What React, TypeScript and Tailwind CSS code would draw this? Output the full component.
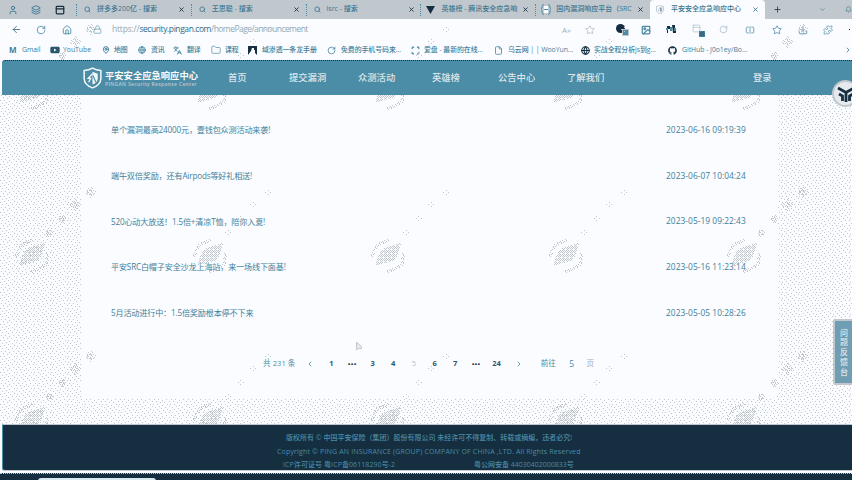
import React from "react";
import { ArrowLeft, RotateCw, Home, Lock, Star, Search, X, Plus, ChevronDown, ChevronRight, ChevronLeft, Globe, Folder, File, Languages, Scan, Layers, User, PanelTop, Puzzle, SquareSplitHorizontal, Image, MapPin, Download, Bell } from "lucide-react";
import { FaGithub, FaYoutube } from "react-icons/fa";

const TEAL = "#4b8ca6";
const NAVY = "#152e40";
const GRAY = "#c0c8ce";

/** A fixed-width slot, so that each bar is laid out as a run of cells. */
function Cell({ w, className = "", children }: { w: number; className?: string; children?: React.ReactNode }) {
  return (
    <div className={"flex h-full shrink-0 items-center whitespace-nowrap " + className} style={{ width: w }}>
      {children}
    </div>
  );
}

function ShieldLogo({ size, color }: { size: number; color: string }) {
  return (
    <svg width={size} height={size * 1.15} viewBox="0 0 20 23" fill="none" stroke={color} strokeWidth="1.6">
      <path d="M10 1.2 C7 3 4 3.6 1.2 3.8 V12 C1.2 17 5 20 10 22 C15 20 18.8 17 18.8 12 V3.8 C16 3.6 13 3 10 1.2Z" />
      <path d="M10 5 L15.5 7 V12 C15.5 15 13.5 17 10 18.5Z" fill={color} stroke="none" />
      <path d="M10 7 L5.5 12 H8 L6 16" strokeWidth="1.4" />
      <path d="M10.5 9 L13.5 16" stroke={TEAL} strokeWidth="1.2" />
    </svg>
  );
}

const tabs = [
  { title: "拼多多200亿 - 搜索", icon: "search" },
  { title: "王思聪 - 搜索", icon: "search" },
  { title: "lsrc - 搜索", icon: "search" },
  { title: "英雄榜 - 腾讯安全应急响", icon: "tri" },
  { title: "国内漏洞响应平台（SRC", icon: "braces" },
];

function TabBar() {
  return (
    <div className="flex h-[19px] items-center bg-[#c0c8ce] text-[7px] text-[#3a7691]">
      <Cell w={76}>
        <Cell w={31} className="pl-2"><User size={10} strokeWidth={2.2} /></Cell>
        <Cell w={24}><Layers size={10} strokeWidth={2.2} /></Cell>
        <Cell w={20}><PanelTop size={10} strokeWidth={3} color={NAVY} /></Cell>
      </Cell>
      {tabs.map((t) => (
        <div key={t.title} className="flex h-full w-[114.8px] shrink-0 items-center">
          <span className="h-[12px] w-px border-l border-dotted border-[#4b8ca6]" />
          <Cell w={20} className={t.icon === "search" ? "pl-[7px]" : "pl-[5px]"}>
            {t.icon === "search" && <Search size={7} strokeWidth={2.8} />}
            {t.icon === "tri" && <svg width="9" height="8" viewBox="0 0 9 8"><path d="M0 0 H9 L4.5 8Z" fill={NAVY} /></svg>}
            {t.icon === "braces" && (
              <svg width="10" height="11" viewBox="0 0 10 11" fill="none" stroke={TEAL}>
                <path d="M3 .5 Q1 .5 1 3 V4 L0 5.5 L1 7 V8 Q1 10.5 3 10.5 M7 .5 Q9 .5 9 3 V4 L10 5.5 L9 7 V8 Q9 10.5 7 10.5" />
                <path d="M3 2h4v7H3z" fill="#fafcff" stroke="none" /><path d="M3 5.5h4" />
              </svg>
            )}
          </Cell>
          <Cell w={81} className="font-medium">{t.title}</Cell>
          <X size={7} strokeWidth={3} color={NAVY} className="shrink-0" />
        </div>
      ))}
      <div className="flex h-full w-[115px] shrink-0 items-center rounded-t-[4px] bg-[#fafcff] pl-[6px]">
        <Cell w={15}><ShieldLogo size={8} color="#9fb2bd" /></Cell>
        <Cell w={81} className="font-medium">平安安全应急响应中心</Cell>
        <X size={7} strokeWidth={3} />
      </div>
      <Cell w={54} className="pl-2"><Plus size={9} strokeWidth={2} color={NAVY} /></Cell>
      <Cell w={26}><ChevronDown size={7} /></Cell>
      <Bell size={7} className="shrink-0" />
    </div>
  );
}

function AddressBar() {
  return (
    <div className="flex h-[21px] items-center text-[#4b8ca6]">
      <Cell w={36} className="pl-[11px]"><ArrowLeft size={11} strokeWidth={1.8} color="#38627a" /></Cell>
      <Cell w={26}><RotateCw size={10} strokeWidth={2} /></Cell>
      <Cell w={31}><Home size={10} strokeWidth={2.2} /></Cell>
      <Cell w={19}><Lock size={9} strokeWidth={1.6} /></Cell>
      <Cell w={450} className="text-[8.5px] tracking-[-0.55px] text-[#93a8b4]">
        <span className="tracking-[-0.2px]">https://</span><span className="tracking-[-0.42px] text-[#2f6c89]">security.pingan.com</span>/homePage/announcement
      </Cell>
      <Cell w={23} className="text-[8px] text-[#9fb0ba]">A»</Cell>
      <Cell w={31}><Star size={10} strokeWidth={1.6} color="#9fb0ba" /></Cell>
      <Cell w={25}>
        <div className="relative h-3 w-3">
          <div className="h-[9px] w-[9px] rounded-full bg-[#152e40]" />
          <div className="absolute -right-px bottom-0 h-[7px] w-[7px] border border-[#c0c8ce] bg-[#4b8ca6]" />
        </div>
      </Cell>
      <Cell w={25}><Image size={10} strokeWidth={3} /></Cell>
      <Cell w={26}>
        <svg width="10" height="9" viewBox="0 0 10 9"><path d="M1 1h3v3H2v4H1zM6 0h3v4h1v4H7z" fill={NAVY} /><path d="M4 2h2v4H4zM0 3h2v2H0zM8 3h2v3H8z" fill={TEAL} /></svg>
      </Cell>
      <Cell w={27}>
        <div className="relative h-3 w-3">
          <PanelTop size={9} strokeWidth={1.5} color="#9fb0ba" />
          <div className="absolute -bottom-px -right-px h-[6px] w-[6px] border border-dotted border-[#4b8ca6] bg-[#3a6a82]" />
        </div>
      </Cell>
      <Cell w={26}><RotateCw size={9} strokeWidth={1.5} color="#8aa8b7" /></Cell>
      <Cell w={27}><SquareSplitHorizontal size={10} strokeWidth={1.8} /></Cell>
      <Cell w={26}><Star size={10} strokeWidth={2} /></Cell>
      <Cell w={25}><Download size={10} strokeWidth={2} /></Cell>
      <Cell w={26}><Puzzle size={10} strokeWidth={1.8} /></Cell>
      <span className="h-px w-px bg-[#152e40]" />
    </div>
  );
}

const bookmarks = [
  { icon: <span className="w-[9px] text-[8px] font-bold leading-none">M</span>, iw: 13, w: 28, text: "Gmail" },
  { icon: <FaYoutube size={10} color="#28566d" />, iw: 13, w: 39, text: "YouTube" },
  { icon: <MapPin size={8} strokeWidth={3} />, iw: 12, w: 24, text: "地图" },
  { icon: <Globe size={8} strokeWidth={2.5} />, iw: 13, w: 22, text: "资讯" },
  { icon: <Languages size={9} strokeWidth={2.4} />, iw: 14, w: 24, text: "翻译" },
  { icon: <Folder size={10} strokeWidth={1.5} />, iw: 14, w: 23, text: "课程" },
  { icon: <svg width="9" height="9" viewBox="0 0 9 9"><path d="M0 0h9v9L7 7V4H6V2H4l-1 3L0 9z" fill={NAVY} /></svg>, iw: 14, w: 65, text: "域渗透一条龙手册" },
  { icon: <RotateCw size={9} strokeWidth={2} />, iw: 14, w: 70, text: "免费的手机号码来..." },
  { icon: <Scan size={9} strokeWidth={2.8} />, iw: 13, w: 70, text: "爱盘 - 最新的在线..." },
  { icon: <File size={9} strokeWidth={2} />, iw: 14, w: 73, text: "乌云网 | | WooYun..." },
  { icon: <Globe size={9} strokeWidth={3} color={NAVY} />, iw: 13, w: 74, text: "实战全程分析js到g..." },
  { icon: <FaGithub size={9} color={NAVY} />, iw: 14, w: 162, text: "GitHub - J0o1ey/Bo..." },
];

function Bookmarks() {
  return (
    <div className="flex h-[20px] items-center overflow-hidden pl-[9px] text-[6.9px] text-[#3f7f9a]">
      {bookmarks.map((b) => (
        <Cell key={b.text} w={b.iw + b.w} className="font-medium tracking-[-0.05px]">
          <Cell w={b.iw}>{b.icon}</Cell>
          {b.text}
        </Cell>
      ))}
      <ChevronRight size={8} strokeWidth={2.5} className="shrink-0" />
    </div>
  );
}

const nav = [
  ["首页", 61], ["提交漏洞", 69], ["众测活动", 74], ["英雄榜", 66], ["公告中心", 69], ["了解我们", 186], ["登录", 30],
] as const;

function SiteHeader() {
  return (
    <header className="relative z-20 ml-[2px] flex h-[35px] items-center rounded-tl-[3px] border-t border-dotted border-[#152e40] bg-[#4b8ca6] pl-[80px] text-[#dde6eb]">
      <Cell w={23} className="pl-px"><ShieldLogo size={19} color="#f4f8fb" /></Cell>
      <div className="flex w-[123px] shrink-0 flex-col whitespace-nowrap">
        <span className="text-[9.3px] font-bold leading-[11px] text-[#fafcff]">平安安全应急响应中心</span>
        <span className="text-[5px] font-semibold leading-[6px] tracking-[0.32px] text-[#c0c8ce]">PINGAN Security Response Center</span>
      </div>
      {nav.map(([label, w]) => (
        <Cell key={label} w={w} className="text-[9.3px] font-medium">{label}</Cell>
      ))}
    </header>
  );
}

const items = [
  ["单个漏洞最高24000元，壹钱包众测活动来袭!", "2023-06-16 09:19:39"],
  ["端午双倍奖励，还有Airpods等好礼相送!", "2023-06-07 10:04:24"],
  ["520心动大放送！1.5倍+清凉T恤，陪你入夏!", "2023-05-19 09:22:43"],
  ["平安SRC白帽子安全沙龙上海站，来一场线下面基!", "2023-05-16 11:23:14"],
  ["5月活动进行中：1.5倍奖励根本停不下来", "2023-05-05 10:28:26"],
];

const pages = ["1", "···", "3", "4", "5", "6", "7", "···", "24"];

function Pagination() {
  return (
    <div className="flex h-[14px] items-center pl-[182px] text-[7.5px] text-[#4b8ca6]">
      <Cell w={36} className="tracking-[0.1px]">共 231 条</Cell>
      <Cell w={22} className="justify-center"><ChevronLeft size={8} strokeWidth={2.5} /></Cell>
      {pages.map((p, i) => (
        <Cell key={i} w={20.65} className={"justify-center " + (p === "5" ? "text-[#b5c0c8]" : "font-bold text-[#2c586f]")}>
          {p === "···" ? <span className="text-[11px] tracking-[-0.2px] text-[#152e40]">{p}</span> : p}
        </Cell>
      ))}
      <Cell w={24} className="justify-center"><ChevronRight size={8} strokeWidth={2.5} /></Cell>
      <Cell w={29} className="pl-[10px]">前往</Cell>
      <Cell w={24} className="justify-center text-[8.5px]">5</Cell>
      <Cell w={13} className="justify-center text-[#9fb0ba]">页</Cell>
    </div>
  );
}

const marks: number[][] = [];
for (const y of [93, 256, 420]) for (const x of [32, 210, 388, 566, 744]) marks.push([x, y]);

/** Stippled backdrop tile; offset rows keep the dots from lining up. */
function Stipple() {
  return (
    <svg className="absolute inset-0 h-full w-full" shapeRendering="crispEdges">
      <defs>
        <pattern id="stipple" width="17" height="16" patternUnits="userSpaceOnUse">
          <path fill={GRAY} d="M1 0h1v1h-1zM5 0h1v1h-1zM9 1h1v1h-1zM13 0h1v1h-1zM16 2h1v1h-1zM3 2h1v1h-1zM7 3h1v1h-1zM11 3h1v1h-1zM0 5h1v1h-1zM4 5h1v1h-1zM9 6h1v1h-1zM14 5h1v1h-1zM2 8h1v1h-1zM6 7h1v1h-1zM12 8h1v1h-1zM16 7h1v1h-1zM4 10h1v1h-1zM8 9h1v1h-1zM10 11h1v1h-1zM14 10h1v1h-1zM0 11h1v1h-1zM2 13h1v1h-1zM6 12h1v1h-1zM12 13h1v1h-1zM16 13h1v1h-1zM8 14h1v1h-1z" />
        </pattern>
      </defs>
      <rect width="100%" height="100%" fill="url(#stipple)" />
    </svg>
  );
}

function Watermarks() {
  return (
    <svg className="pointer-events-none absolute inset-0 z-10 h-[480px] w-[852px]" viewBox="0 0 852 480" shapeRendering="crispEdges">
      <defs>
        <pattern id="leaf" width="4" height="4" patternUnits="userSpaceOnUse">
          <path d="M0 0h1v1h-1zM2 0h1v1h-1zM1 1h1v1h-1zM0 2h1v1h-1zM2 2h1v1h-1zM3 3h1v1h-1zM1 3h1v1h-1z" fill={GRAY} />
        </pattern>
        <pattern id="dots" width="4" height="4" patternUnits="userSpaceOnUse">
          <path d="M0 0h1v1h-1zM2 1h1v1h-1zM1 2h1v1h-1zM3 3h1v1h-1zM3 2h1v1h-1z" fill={GRAY} />
        </pattern>
        <pattern id="sparse" width="5" height="4" patternUnits="userSpaceOnUse">
          <path d="M0 0h1v1h-1zM3 2h1v1h-1z" fill={GRAY} />
        </pattern>
        <g id="mark">
          <path d="M-13 10 L-9 -3 L-4 -8 L14 -14 L9 0 L4 5Z" fill="url(#leaf)" />
          <path d="M-16 2 L-14 -7 L-9 -12 L2 -16 M16 -3 L14 8 L9 12 L-2 16" fill="none" stroke="url(#dots)" strokeWidth="3" />
          <path d="M12 -23l5 -4l5 4l-5 4z M25 -37l5 -5l5 5l-5 5z M38 -51l5 -5l5 5l-5 5z M53 -64l5 -5l5 5l-5 5z" fill="url(#sparse)" />
        </g>
        <g id="side">
          <path d="M12 -23l5 -4l5 4l-5 4z M25 -37l5 -5l5 5l-5 5z M37 -51l6 -6l6 6l-6 6z M52 -64l6 -6l6 6l-6 6z" fill="url(#dots)" />
        </g>
      </defs>
      {marks.map(([x, y]) => <use key={`${x}-${y}`} href="#mark" x={x} y={y} />)}
      {marks.filter(([x]) => x === 744).map(([x, y]) => <use key={`s${x}-${y}`} href="#side" x={x} y={y} />)}
      {marks.filter(([x]) => x === 32).map(([x, y]) => <use key={`s${x}-${y}`} href="#side" x={x} y={y} />)}
    </svg>
  );
}

function Announcements() {
  return (
    <main className="relative h-[329px] bg-[#fafcff]">
      <Stipple />
      <section className="relative ml-[81px] h-[303px] w-[697px] rounded-b-[6px] bg-[#fafcff] pt-[12.5px]">
        {items.map(([title, date]) => (
          <div key={date} className="flex h-[45.7px] items-center pl-[30px] text-[#3f7f9a]">
            <div className="w-[555px] whitespace-nowrap text-[8.1px] tracking-[-0.16px]">{title}</div>
            <div className="whitespace-nowrap text-[8.4px] tracking-[0.04px]">{date}</div>
          </div>
        ))}
        <div className="pt-[21px]"><Pagination /></div>
      </section>
    </main>
  );
}

function Footer() {
  return (
    <footer className="relative z-20 ml-[2px] flex h-[47px] flex-col rounded-bl-[3px] border-y border-l border-[#c0c8ce] border-l-[#4b8ca6] bg-[#152e40] pt-[6px] text-[7px] font-semibold leading-[13.5px] text-[#4b8ca6]">
      <div className="whitespace-nowrap pl-[283px] font-medium">版权所有 © 中国平安保险（集团）股份有限公司 未经许可不得复制、转载或摘编，违者必究!</div>
      <div className="whitespace-nowrap pl-[274px] font-medium tracking-[0.16px]">Copyright © PING AN INSURANCE (GROUP) COMPANY OF CHINA ,LTD. All Rights Reserved</div>
      <div className="flex whitespace-nowrap pl-[280px] font-medium">
        <span className="w-[191px] tracking-[0.08px]">ICP许可证号 粤ICP备06118290号-2</span>
        <span>粤公网安备 44030402000833号</span>
      </div>
    </footer>
  );
}

export default function App() {
  return (
    <div className="relative h-[480px] w-[852px] overflow-hidden bg-[#fafcff] font-['Open_Sans','Noto_Sans_CJK_SC',sans-serif]">
      <TabBar />
      <AddressBar />
      <Bookmarks />
      <SiteHeader />
      <Announcements />
      <Footer />
      <div className="relative z-20 mt-[2px] h-[8px] border-t border-dotted border-[#c0c8ce] bg-[#152e40]">
        <div className="ml-[38px] mt-[4px] h-[6px] w-[118px] rounded-t-[3px] bg-[#d7e8ee]" />
      </div>
      <Watermarks />
      <svg className="absolute left-[356px] top-[342px] z-20" width="6" height="9" viewBox="0 0 6 9"><path d="M.5 0V8L2.5 6.5H5.5V4.5Z" fill="#e4eaee" stroke={GRAY} /></svg>
      <div className="absolute left-[832px] top-[80px] z-30 flex h-[27px] w-[27px] items-center justify-center rounded-full border-2 border-[#c0c8ce] bg-[#e4eaee]">
        <svg width="18" height="16" viewBox="0 0 18 16" fill="none" stroke={NAVY} strokeWidth="2.8"><path d="M1 2 L9 6.500 L17 2 M9 6.500 V16 M2 8 L5.500 10 V15 M16 8 L12.500 10 V15" /></svg>
      </div>
      <div className="absolute left-[833px] top-[319px] z-30 flex h-[66px] w-[22px] flex-col items-center justify-center rounded-l-[2px] border-2 border-[#c0c8ce] bg-[#6f9eb3] text-[8px] font-medium leading-[9.8px] text-[#e0e6ea]">
        <span>问</span><span>题</span><span>反</span><span>馈</span><span>台</span>
      </div>
    </div>
  );
}
